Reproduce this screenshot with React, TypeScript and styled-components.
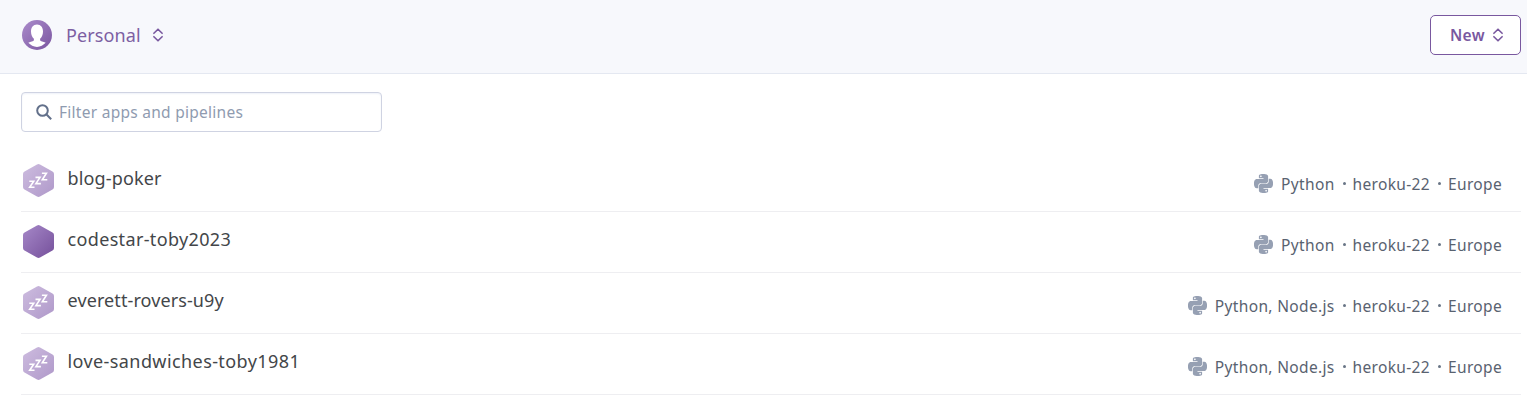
import React from 'react';
import styled, { createGlobalStyle } from 'styled-components';
import { SiPython } from 'react-icons/si';

const Global = createGlobalStyle`
  * { box-sizing: border-box; }
  body { margin: 0; background: #fff; font-family: "Noto Sans", "Open Sans", sans-serif; overflow: hidden; }
`;

const Header = styled.header`
  display: flex;
  justify-content: space-between;
  align-items: flex-start;
  height: 74px;
  padding: 15px 6px 0 22px;
  background: #f7f8fc;
  border-bottom: 1px solid #e4e8f1;
`;

const Account = styled.div`
  display: flex;
  align-items: center;
  height: 40px;
  color: #7d5fa3;
  font-size: 18px;
`;

const AccountName = styled.span`
  margin: 0 12px 0 14px;
  letter-spacing: 0.1px;
`;

const NewButton = styled.button`
  display: flex;
  align-items: center;
  justify-content: space-between;
  width: 91px;
  height: 40px;
  padding: 0 17px 1px 19px;
  border: 1px solid #79589f;
  border-radius: 5px;
  background: #fff;
  color: #79589f;
  font: 600 15.5px "Noto Sans", sans-serif;
  letter-spacing: 0.3px;
`;

const Main = styled.main`
  padding: 18px 6px 0 21px;
`;

const Search = styled.label`
  display: flex;
  align-items: center;
  gap: 7px;
  width: 361px;
  height: 40px;
  padding: 0 14px;
  border: 1px solid #cfd3e2;
  border-radius: 4px;
  box-shadow: inset 0 1px 2px #eef1f8;
`;

const SearchInput = styled.input`
  flex: 1;
  min-width: 0;
  padding: 0;
  border: 0;
  outline: 0;
  background: transparent;
  color: #3f3f44;
  font: 15.5px "Noto Sans", sans-serif;
  letter-spacing: 0.27px;
  &::placeholder { color: #8f9bb0; opacity: 1; }
`;

const List = styled.ul`
  margin: 19px 0 0;
  padding: 0;
  list-style: none;
`;

const Row = styled.li`
  display: flex;
  align-items: center;
  height: 61px;
  padding: 0 19px 1px 2px;
  border-bottom: 1px solid #eeeef1;
`;

const AppName = styled.span<{ $tracking: number }>`
  flex: 1;
  margin-left: 12.5px;
  padding-bottom: 5px;
  color: #434649;
  font-size: 18px;
  letter-spacing: ${(p) => p.$tracking}px;
`;

const Meta = styled.div`
  display: flex;
  align-items: center;
  padding-top: 6px;
  color: #596270;
  font-size: 15.5px;
  letter-spacing: 0.34px;
`;

const Language = styled.span`
  margin-left: 8px;
`;

const Dot = styled.i`
  width: 3px;
  height: 3px;
  margin: 0 7px 0 8px;
  border-radius: 50%;
  background: #697586;
`;

const Sorter = () => (
  <svg width="10" height="14" viewBox="0 0 10 14" fill="none" stroke="#79589f" strokeWidth="1.6" strokeLinecap="round" strokeLinejoin="round">
    <path d="M.9 5.300 5 1.200l4.100 4.100M.9 8.700 5 12.800l4.100-4.100" />
  </svg>
);

const Avatar = () => (
  <svg width="30" height="30" viewBox="0 0 30 30">
    <defs>
      <linearGradient id="avatar" x1="0" y1="0" x2="1" y2="1">
        <stop stopColor="#ab8ccb" />
        <stop offset="1" stopColor="#7a55a0" />
      </linearGradient>
    </defs>
    <circle cx="15" cy="15" r="15" fill="url(#avatar)" />
    <path fill="#fff" d="M15 4.600c-3.900 0-6 3.100-6 7 0 3.200 1.200 5.700 2.900 7.200v1.400c-.3 1.100-3.200 1.300-5.600 2.600C8.600 25.100 11.600 26.900 15 26.900s6.400-1.800 8.700-4.100c-2.400-1.300-5.300-1.500-5.600-2.600v-1.400c1.700-1.500 2.900-4 2.900-7.200 0-3.900-2.100-7-6-7Z" />
  </svg>
);

const Hexagon = ({ id, asleep }: { id: string; asleep: boolean }) => (
  <svg width="32" height="34" viewBox="0 0 32 34">
    <defs>
      <linearGradient id={id} x1="0" y1="0" x2="1" y2="1">
        <stop stopColor={asleep ? '#cdbcdf' : '#a688c8'} />
        <stop offset="1" stopColor={asleep ? '#af98c9' : '#75509b'} />
      </linearGradient>
    </defs>
    <g transform="translate(0 -.5)">
      <path fill={`url(#${id})`} d="M14 1Q15.500.200 17 1l12.500 7Q31 8.800 31 10.500v13q0 1.700-1.500 2.500L17 33q-1.500.800-3 0L1.500 26Q0 25.200 0 23.500v-13Q0 8.800 1.500 8Z" />
      {asleep && (
        <path fill="none" stroke="#fff" strokeWidth="1.600" d="M6.300 17.800h4.400l-4 6h4.800M12.500 13.900h4.500l-4.100 6.200h5M18.900 9.800h4.500l-4.100 6.500h5" />
      )}
    </g>
  </svg>
);

const apps = [
  { name: 'blog-poker', language: 'Python', asleep: true, tracking: 0.15 },
  { name: 'codestar-toby2023', language: 'Python', asleep: false, tracking: 0.35 },
  { name: 'everett-rovers-u9y', language: 'Python, Node.js', asleep: true, tracking: 0.1 },
  { name: 'love-sandwiches-toby1981', language: 'Python, Node.js', asleep: true, tracking: 0.41 },
];

export default function App() {
  return (
    <>
      <Global />
      <Header>
        <Account>
          <Avatar />
          <AccountName>Personal</AccountName>
          <Sorter />
        </Account>
        <NewButton>New <Sorter /></NewButton>
      </Header>
      <Main>
        <Search>
          <svg width="16" height="16" viewBox="0 0 16 16" fill="none" stroke="#62708a" strokeWidth="2">
            <circle cx="6.500" cy="6.500" r="5.300" />
            <path d="m10.300 10.300 4.900 4.900" />
          </svg>
          <SearchInput placeholder="Filter apps and pipelines" />
        </Search>
        <List>
          {apps.map((app) => (
            <Row key={app.name}>
              <Hexagon id={`hex-${app.name}`} asleep={app.asleep} />
              <AppName $tracking={app.tracking}>{app.name}</AppName>
              <Meta>
                <SiPython size={19} color="#96a0b3" />
                <Language>{app.language}</Language>
                <Dot />
                <span>heroku-22</span>
                <Dot />
                <span>Europe</span>
              </Meta>
            </Row>
          ))}
        </List>
      </Main>
    </>
  );
}
